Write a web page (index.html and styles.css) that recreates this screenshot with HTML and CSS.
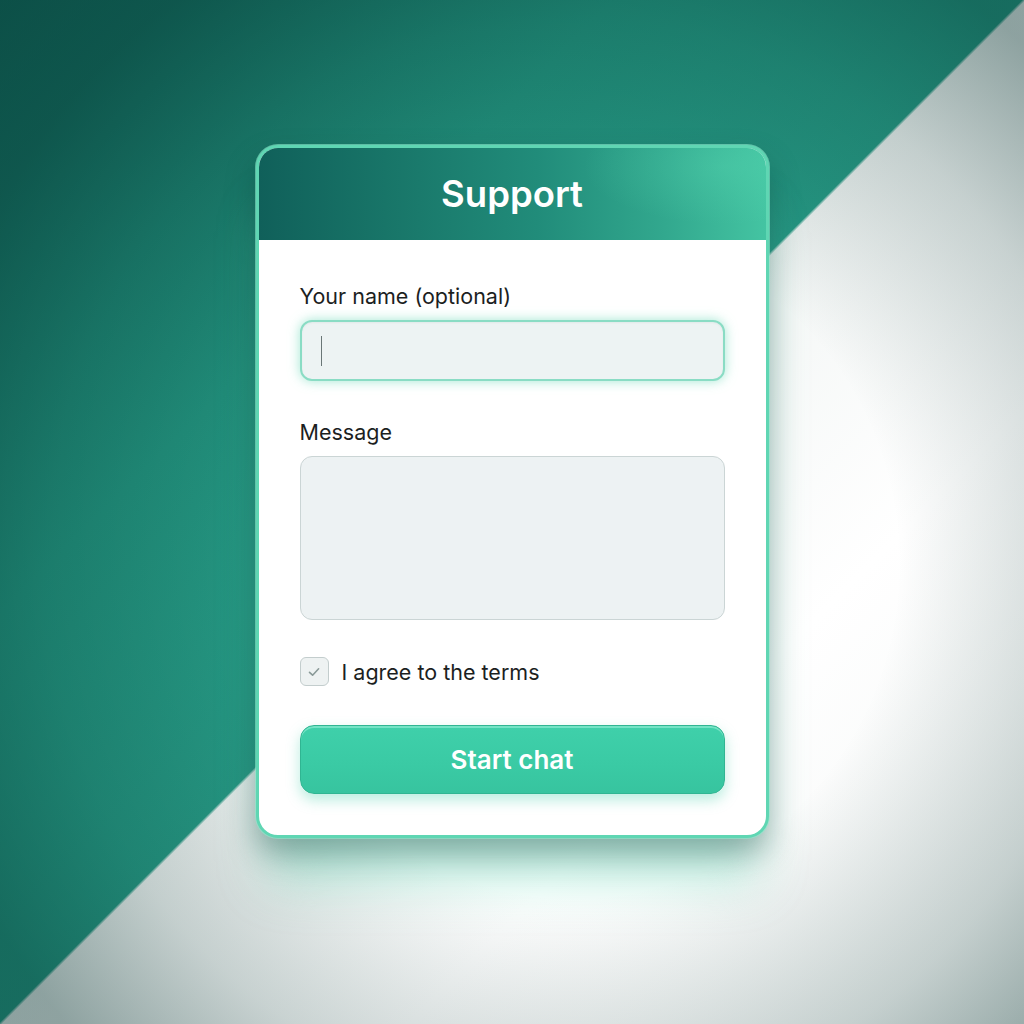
FILE: index.html
```html
<!DOCTYPE html>
<html>
<head>
<meta charset="utf-8">
<link rel="stylesheet" href="styles.css">
</head>
<body>
<div class="scene">
  <div class="card">
    <div class="card-header">Support</div>
    <form class="card-body">
      <label class="label">Your name (optional)</label>
      <div class="input focused"><span class="caret"></span></div>
      <label class="label label-gap">Message</label>
      <div class="textarea"></div>
      <div class="agree">
        <span class="checkbox">
          <svg width="16" height="16" viewBox="0 0 16 16"><path d="M3.5 8.3 L6.6 11.2 L12.6 4.8" fill="none" stroke="#8a9a98" stroke-width="1.6" stroke-linecap="round" stroke-linejoin="round"/></svg>
        </span>
        <span class="agree-text">I agree to the terms</span>
      </div>
      <button type="button" class="btn">Start chat</button>
    </form>
  </div>
</div>
</body>
</html>
```

FILE: styles.css
```css
* { box-sizing: border-box; }
html, body { margin: 0; padding: 0; }
body {
  font-family: Inter, "Noto Sans", "Liberation Sans", sans-serif;
}
.scene {
  width: 1024px;
  height: 1024px;
  display: flex;
  justify-content: center;
  align-items: flex-start;
  padding-top: 145px;
  background:
    radial-gradient(ellipse 66% 68% at 56% 55%, rgba(0,45,42,0) 48%, rgba(0,45,42,0.2) 78%, rgba(0,45,42,0.42) 100%),
    linear-gradient(to bottom right, #15695d 0%, #22907c 30%, #279a85 49.9%, #f3f6f5 50.1%, #ffffff 70%, #f2f5f4 100%);
}
.card {
  width: 513px;
  border: 3px solid #5fd6b3;
  border-radius: 22px;
  background: #ffffff;
  overflow: hidden;
  box-shadow:
    0 0 0 1px rgba(140,235,205,0.6),
    0 16px 30px rgba(10,50,45,0.35),
    0 55px 50px -12px rgba(90,215,180,0.38);
}
.card-header {
  height: 92px;
  display: flex;
  align-items: center;
  justify-content: center;
  color: #ffffff;
  font-size: 36.5px;
  font-weight: 600;
  background:
    radial-gradient(ellipse 40% 90% at 92% 20%, rgba(90,220,180,0.3), rgba(90,220,180,0) 70%),
    linear-gradient(90deg, #10605a 0%, #187568 25%, #218c7a 55%, #32a88e 80%, #44c4a2 100%);
}
.card-body {
  margin: 0;
  padding: 44px 41px 41px;
  display: flex;
  flex-direction: column;
}
.label {
  font-size: 21.5px;
  line-height: 24px;
  color: #1c1f1f;
  margin-bottom: 12px;
}
.label-gap { margin-top: 39px; }
.input {
  height: 61px;
  border-radius: 12px;
  background: #edf3f3;
  border: 2px solid #8adcc4;
  box-shadow: 0 0 12px rgba(100,215,180,0.6), inset 0 1px 2px rgba(0,60,50,0.05);
  display: flex;
  align-items: center;
  padding-left: 19px;
}
.caret {
  width: 1px;
  height: 30px;
  background: #6a7676;
}
.textarea {
  height: 164px;
  border-radius: 12px;
  background: #edf2f3;
  border: 1.5px solid #cbd5d5;
}
.agree {
  margin-top: 37px;
  display: flex;
  align-items: center;
  gap: 13px;
}
.checkbox {
  width: 29px;
  height: 29px;
  border-radius: 6px;
  background: #eef2f2;
  border: 1.5px solid #c3cdcd;
  display: flex;
  align-items: center;
  justify-content: center;
}
.agree-text {
  font-size: 21.5px;
  line-height: 24px;
  color: #1c1f1f;
}
.btn {
  margin-top: 39px;
  height: 69px;
  border-radius: 14px;
  border: 1.5px solid #30b592;
  background: linear-gradient(180deg, #3fd0aa 0%, #3acaa4 60%, #37c49f 100%);
  color: #ffffff;
  font-family: Inter, "Noto Sans", "Liberation Sans", sans-serif;
  font-size: 26px;
  font-weight: 600;
  box-shadow: 0 6px 14px rgba(80,210,175,0.4), inset 0 2px 0 rgba(150,240,215,0.6);
  cursor: pointer;
}
```
